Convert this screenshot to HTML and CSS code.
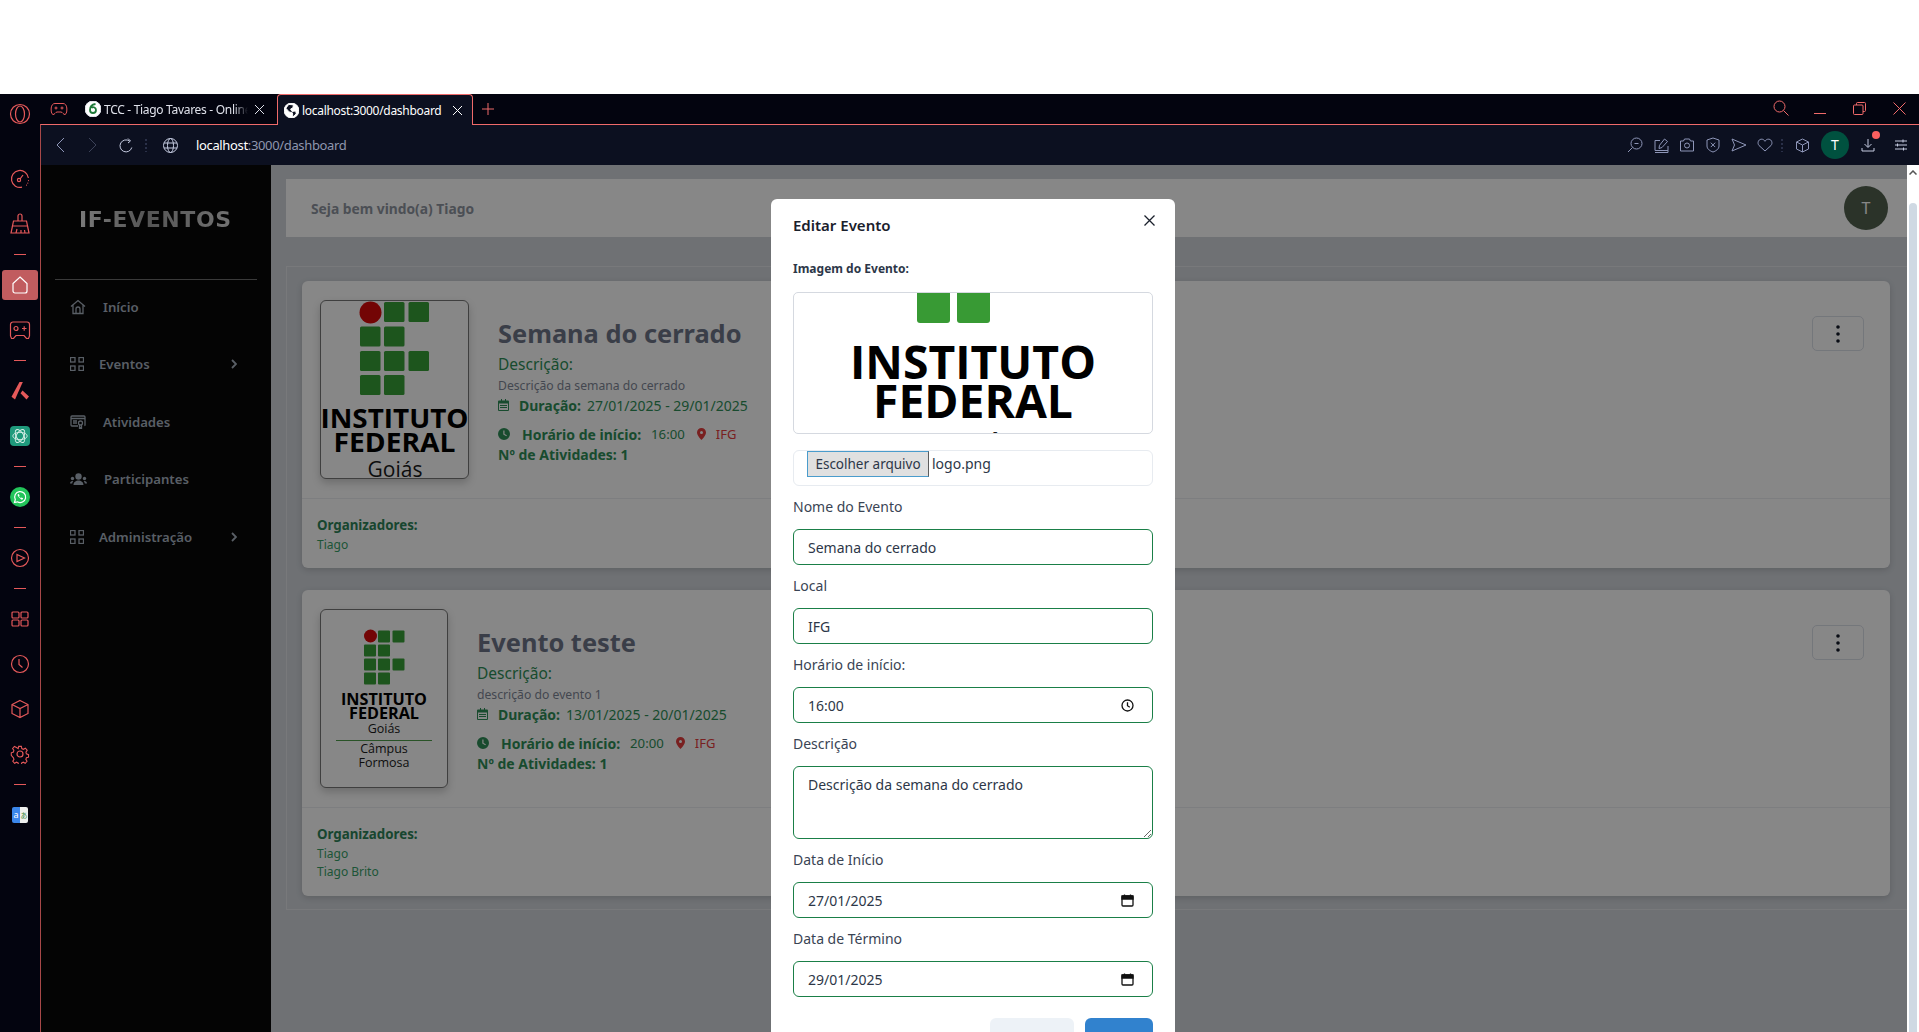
FILE: index.html
```html
<!DOCTYPE html>
<html lang="pt-BR">
<head>
    <meta charset="UTF-8">
    <title>IF-Eventos</title>
    <link rel="stylesheet" href="styles.css">
</head>
<body>
    <div class="top-gap"></div>
    <div class="browser">
        <!-- browser side rail -->
        <aside class="rail">
            <div class="rail-logo">
                <svg width="22" height="22" viewBox="0 0 22 22"><circle cx="11" cy="11" r="9.5"/><ellipse cx="11" cy="11" rx="4.5" ry="8"/></svg>
            </div>
            <div class="rail-item"><svg width="20" height="20" viewBox="0 0 20 20"><path d="M12 18.2A8.5 8.5 0 1 1 18.4 9"/><path d="M18.5 11.5v.1M17.8 14v.1M16.5 16v.1" stroke-linecap="round"/><circle cx="9" cy="11" r="1.6"/><path d="M10 10l3-4"/></svg></div>
            <div class="rail-item"><svg width="20" height="22" viewBox="0 0 20 22"><path d="M8 8V3a2 2 0 0 1 4 0v5"/><path d="M3.5 8h13l1 5H2.5z"/><path d="M2.5 13L1 20h18l-1.5-7M6 20l1-4M11 20v-3M15 20l-.5-3"/></svg></div>
            <div class="rail-sep"></div>
            <div class="rail-item rail-item-active"><span class="rail-home"><svg width="20" height="20" viewBox="0 0 20 20"><path d="M10 2l7 6.5V16a2 2 0 0 1-2 2H5a2 2 0 0 1-2-2V8.5z"/></svg></span></div>
            <div class="rail-item"><svg width="22" height="20" viewBox="0 0 22 20"><path d="M4 2h14a2.5 2.5 0 0 1 2.5 2.5V16l-1 2.5h-2L15 15.500H7l-2.500 3h-2L1.500 16V4.500A2.500 2.500 0 0 1 4 2z"/><circle cx="7" cy="8.5" r="2"/><path d="M13 8.5h4.500M15.200 6.300v4.400"/></svg></div>
            <div class="rail-sep"></div>
            <div class="rail-item"><svg width="20" height="20" viewBox="0 0 20 20"><path class="solid" d="M9.500 1h3.300L5 18.500l-3.500-2.700z"/><path class="solid" d="M12.500 9.500l6.500 6-2.500 3-6-6.300z"/></svg></div>
            <div class="rail-item"><span class="app-gpt"><svg width="16" height="16" viewBox="0 0 14 14"><ellipse cx="7" cy="7" rx="6.300" ry="3.200"/><ellipse cx="7" cy="7" rx="6.300" ry="3.200" transform="rotate(60 7 7)"/><ellipse cx="7" cy="7" rx="6.300" ry="3.200" transform="rotate(120 7 7)"/></svg></span></div>
            <div class="rail-sep"></div>
            <div class="rail-item"><span class="app-whats"><svg width="14" height="14" viewBox="0 0 14 14"><path d="M1.500 12.500l.8-2.900A5.500 5.500 0 1 1 4.400 11.800z"/><path class="phone" d="M5 4.200l.8-.2.8 1.600-.6.700c.4.800 1 1.400 1.900 1.800l.7-.6 1.500.8-.2.800c-.3.500-1 .7-1.600.5C6.800 8.100 5.400 6.800 4.700 5.500c-.2-.5 0-1 .3-1.300z"/></svg></span></div>
            <div class="rail-sep"></div>
            <div class="rail-item"><svg width="20" height="20" viewBox="0 0 20 20"><circle cx="10" cy="10" r="8.500"/><path d="M7 6.500L14.500 10 7 13.500z"/></svg></div>
            <div class="rail-sep"></div>
            <div class="rail-item"><svg width="18" height="16" viewBox="0 0 18 16"><rect x="1" y="1" width="7" height="6" rx="1"/><rect x="10" y="1" width="7" height="6" rx="1"/><rect x="1" y="9" width="7" height="6" rx="1"/><rect x="10" y="9" width="7" height="6" rx="1"/></svg></div>
            <div class="rail-item"><svg width="20" height="20" viewBox="0 0 20 20"><circle cx="10" cy="10" r="8.500"/><path d="M9 5v5.500l3.500 3"/></svg></div>
            <div class="rail-item"><svg width="20" height="20" viewBox="0 0 20 20"><path d="M10 1.500l8 4v9l-8 4-8-4v-9zM2 5.500l8 4 8-4M10 9.500v9"/></svg></div>
            <div class="rail-item"><svg width="20" height="20" viewBox="0 0 20 20"><circle cx="10" cy="10" r="3"/><path d="M8.500 1.500h3l.5 2.500 1.700.8 2.300-1.200 2 2.300-1.400 2.100.5 1.800 2.400.9v2.800l-2.400.7-.6 1.800 1.300 2.100-2 2.200-2.200-1.200-1.700.8-.5 2.300h-3l-.5-2.300-1.700-.8-2.200 1.200-2-2.200 1.300-2.100-.6-1.800L.3 11.500V8.700l2.400-.9.500-1.800-1.400-2.100 2-2.300 2.300 1.200L8 4z" transform="translate(1 1) scale(.9)"/></svg></div>
            <div class="rail-sep"></div>
            <div class="rail-item"><span class="app-translate"><span class="tr-a">a</span><span class="tr-b">あ</span></span></div>
        </aside>

        <div class="main-col">
            <!-- tabs -->
            <div class="tabstrip">
                <div class="tab-game"><svg width="18" height="14" viewBox="0 0 18 14"><path d="M5 1.500h8c2.200 0 3.500 1.800 3.800 4.500.2 2.500 0 6-1.800 6.500-1.500.4-2.500-2.500-4-2.500H7c-1.500 0-2.500 2.900-4 2.500C1.200 12 1 8.500 1.200 6 1.500 3.300 2.800 1.500 5 1.500z"/><circle cx="6" cy="6" r="1"/><circle cx="12" cy="6" r="1"/></svg></div>
                <div class="tab">
                    <span class="fav-tcc"><svg width="16" height="16" viewBox="0 0 16 16"><circle cx="8" cy="8" r="8" fill="#fff"/><path d="M10.500 3C7 3.500 5 6 5 9a3 3 0 0 0 6 0 2.800 2.800 0 0 0-4.500-2.200" fill="none" stroke="#1f7a3a" stroke-width="1.800"/></svg></span>
                    <span class="tab-title tab-title-fade">TCC - Tiago Tavares - Online</span>
                    <svg class="tab-x" width="11" height="11" viewBox="0 0 11 11"><path d="M1 1l9 9M10 1l-9 9"/></svg>
                </div>
                <div class="tab tab-active">
                    <span class="fav-tcc"><svg width="15" height="15" viewBox="0 0 16 16"><circle cx="8" cy="8" r="8" fill="#fff"/><path d="M5 1.500l5 .5-.5 3L7 6.500l1.500 2.500 4-.5.5 3-3.500 3.500L9 10.500 5.500 9.500 2 5.500z" fill="#0c1020"/></svg></span>
                    <span class="tab-title">localhost:3000/dashboard</span>
                    <svg class="tab-x" width="11" height="11" viewBox="0 0 11 11"><path d="M1 1l9 9M10 1l-9 9"/></svg>
                </div>
                <div class="tab-plus"><svg width="12" height="12" viewBox="0 0 12 12"><path d="M6 0v12M0 6h12"/></svg></div>
                <div class="win-controls">
                    <div class="win-btn"><svg width="16" height="16" viewBox="0 0 16 16"><circle cx="6.500" cy="6.500" r="5.500"/><path d="M10.500 10.500l5 5"/></svg></div>
                    <div class="win-btn"><svg width="12" height="12" viewBox="0 0 12 12"><path d="M0 11.500h12"/></svg></div>
                    <div class="win-btn"><svg width="13" height="13" viewBox="0 0 13 13"><rect x=".5" y="3" width="9.500" height="9.500" rx="1"/><path d="M3.500 3V1.500a1 1 0 0 1 1-1h7a1 1 0 0 1 1 1v7a1 1 0 0 1-1 1H10"/></svg></div>
                    <div class="win-btn"><svg width="13" height="13" viewBox="0 0 13 13"><path d="M.5.500l12 12M12.500.500l-12 12"/></svg></div>
                </div>
            </div>

            <div class="window">
                <!-- address bar -->
                <div class="addressbar">
                    <div class="ab-cell"><svg width="10" height="16" viewBox="0 0 10 16"><path d="M9 1L2 8l7 7"/></svg></div>
                    <div class="ab-cell ab-off"><svg width="10" height="16" viewBox="0 0 10 16"><path d="M1 1l7 7-7 7"/></svg></div>
                    <div class="ab-cell ab-light"><svg width="14" height="15" viewBox="0 0 14 15"><path d="M12.800 9.500A6 6 0 1 1 10.500 3"/><path d="M9 .5l2.500 2.500L9 5"/></svg></div>
                    <div class="ab-dots"></div>
                    <div class="ab-globe"><svg width="15" height="15" viewBox="0 0 15 15"><circle cx="7.500" cy="7.500" r="7"/><ellipse cx="7.500" cy="7.500" rx="3" ry="7"/><path d="M1 5h13M1 10h13"/></svg></div>
                    <div class="ab-url"><span class="ab-host">localhost</span>:3000/dashboard</div>

                    <div class="ab-right">
                        <div class="ab-tool"><svg width="16" height="16" viewBox="0 0 16 16"><circle cx="9.500" cy="6.500" r="5.500"/><path d="M5.500 10.500L1 15M7.500 6.500h4"/></svg></div>
                        <div class="ab-tool"><svg width="15" height="15" viewBox="0 0 15 15"><path d="M6 2.500H1v10h13v2H1M14 8v4.500"/><path d="M10.500 1l3 2.500L8 9.500l-3 1 .5-3.200z"/></svg></div>
                        <div class="ab-tool"><svg width="16" height="14" viewBox="0 0 16 14"><path d="M1.500 3h3l1-2h5l1 2h3v10h-13z"/><circle cx="8" cy="7.500" r="2.500"/></svg></div>
                        <div class="ab-tool"><svg width="14" height="16" viewBox="0 0 14 16"><path d="M7 1l6 2v6c0 3-3 5-6 6-3-1-6-3-6-6V3z"/><path d="M4.800 5.700l4.400 4.400M9.200 5.700l-4.400 4.400"/></svg></div>
                        <div class="ab-tool"><svg width="16" height="14" viewBox="0 0 16 14"><path d="M1 1l14 6-14 6 2.500-6z"/></svg></div>
                        <div class="ab-tool"><svg width="16" height="14" viewBox="0 0 16 14"><path d="M8 13L2 7.500C.2 5.500 1 1.500 4.200 1.200 6 1 7.300 2 8 3.300 8.700 2 10 1 11.800 1.200 15 1.500 15.800 5.500 14 7.500z"/></svg></div>
                        <div class="ab-dots"></div>
                        <div class="ab-tool ab-cube"><svg width="15" height="15" viewBox="0 0 15 15"><path d="M7.500 1l6 3v7l-6 3-6-3V4zM1.500 4l6 3 6-3M7.500 7v7"/></svg></div>
                        <div class="ab-avatar">T</div>
                        <div class="ab-tool ab-download"><svg width="14" height="14" viewBox="0 0 14 14"><path d="M7 1v8M3.500 6L7 9.500 10.500 6M1 10v3h12v-3" stroke="#c5cbe0"/></svg><span class="ab-badge"></span></div>
                        <div class="ab-tool ab-menu"><svg width="14" height="12" viewBox="0 0 14 12"><path d="M1 2h12M1 6h12M1 10h12M9 .5v3M3.500 4.500v3M9.500 8.500v3"/></svg></div>
                    </div>
                </div>

                <div class="viewport">
                    <div class="page">
                        <nav class="sidebar">
                            <div class="brand"><span class="brand-text">IF-EVENTOS</span></div>
                            <div class="nav-list">
                                <a class="nav-item"><svg class="nav-ico" width="16" height="16" viewBox="0 0 16 16"><path d="M1 7.500L8 1.500l7 6M3 6v8.500h10V6M6 14.500V10a2 2 0 0 1 4 0v4.500"/></svg><span>Início</span></a>
                                <a class="nav-item nav-item-sub"><svg class="nav-ico" width="14" height="14" viewBox="0 0 14 14"><rect x=".5" y=".5" width="4.500" height="4.500"/><rect x="9" y=".5" width="4.500" height="4.500"/><rect x=".5" y="9" width="4.500" height="4.500"/><rect x="9" y="9" width="4.500" height="4.500"/></svg><span>Eventos</span><svg class="nav-chev" width="6" height="10" viewBox="0 0 6 10"><path d="M1 1l4 4-4 4"/></svg></a>
                                <a class="nav-item"><svg class="nav-ico" width="16" height="14" viewBox="0 0 16 14"><path d="M8 11H2a1 1 0 0 1-1-1V2a1 1 0 0 1 1-1h12a1 1 0 0 1 1 1v8a1 1 0 0 1-.5.8M1 3.500h14M3 6h4M3 8h4"/><circle cx="10.500" cy="8" r="2"/><path d="M9.500 10v3.500l1-.8 1 .8V10"/></svg><span>Atividades</span></a>
                                <a class="nav-item"><svg class="nav-ico nav-ico-solid" width="17" height="13" viewBox="0 0 17 13"><circle cx="8.500" cy="3.500" r="3.200"/><circle cx="2.500" cy="5.500" r="1.700"/><circle cx="14.500" cy="5.500" r="1.700"/><path d="M3.500 12c0-3 2.500-4.500 5-4.500s5 1.500 5 4.500zM0 10.500c0-1.500 1-2.500 2.500-2.500l.8.300c-.7.700-1 1.400-1.100 2.200zM17 10.500c0-1.500-1-2.500-2.500-2.500l-.8.300c.7.700 1 1.400 1.100 2.200z"/></svg><span>Participantes</span></a>
                                <a class="nav-item nav-item-sub"><svg class="nav-ico" width="14" height="14" viewBox="0 0 14 14"><rect x=".5" y=".5" width="4.500" height="4.500"/><rect x="9" y=".5" width="4.500" height="4.500"/><rect x=".5" y="9" width="4.500" height="4.500"/><rect x="9" y="9" width="4.500" height="4.500"/></svg><span>Administração</span><svg class="nav-chev" width="6" height="10" viewBox="0 0 6 10"><path d="M1 1l4 4-4 4"/></svg></a>
                            </div>
                        </nav>

                        <main class="content">
                            <header class="welcome">
                                <span class="welcome-text">Seja bem vindo(a) Tiago</span>
                                <span class="user-avatar">T</span>
                            </header>

                            <section class="events">
                                <article class="card">
                                    <div class="card-body">
                                        <div class="event-img event-img-big">
                                            <svg width="147" height="177" viewBox="0 0 147 177">
                                                <circle cx="49.500" cy="11.500" r="11" fill="#d90a0a"/>
                                                <g fill="#38a038">
                                                    <rect x="63" y="1" width="20.500" height="20" rx="1.500"/><rect x="87.500" y="1" width="20.500" height="20" rx="1.500"/>
                                                    <rect x="39" y="25.500" width="20.500" height="20" rx="1.500"/><rect x="63" y="25.500" width="20.500" height="20" rx="1.500"/>
                                                    <rect x="39" y="50" width="20.500" height="20" rx="1.500"/><rect x="63" y="50" width="20.500" height="20" rx="1.500"/><rect x="87.500" y="50" width="20.500" height="20" rx="1.500"/>
                                                    <rect x="39" y="74" width="20.500" height="20" rx="1.500"/><rect x="63" y="74" width="20.500" height="20" rx="1.500"/>
                                                </g>
                                                <text class="logo-b" x="73.500" y="127" font-size="27" text-anchor="middle" textLength="148" lengthAdjust="spacingAndGlyphs">INSTITUTO</text>
                                                <text class="logo-b" x="73.500" y="151" font-size="27" text-anchor="middle" textLength="122" lengthAdjust="spacingAndGlyphs">FEDERAL</text>
                                                <text class="logo-r" x="74" y="176" font-size="21" text-anchor="middle">Goiás</text>
                                            </svg>
                                        </div>
                                        <div class="event-info">
                                            <h2 class="event-title">Semana do cerrado</h2>
                                            <div class="event-label">Descrição:</div>
                                            <div class="event-desc">Descrição da semana do cerrado</div>
                                            <div class="event-line">
                                                <svg class="ico-green" width="11" height="12" viewBox="0 0 11 12"><path d="M1 1.500h2V0h1v1.500h3V0h1v1.500h2a1 1 0 0 1 1 1V11a1 1 0 0 1-1 1H1a1 1 0 0 1-1-1V2.500a1 1 0 0 1 1-1zM1 4.500V11h9V4.500z"/><path d="M2 6h7v1H2zM2 8h7v1H2z"/></svg>
                                                <b class="gap-dur">Duração:</b><span class="gap-val">27/01/2025 - 29/01/2025</span>
                                            </div>
                                            <div class="event-line event-line-time">
                                                <svg class="ico-green" width="12" height="12" viewBox="0 0 12 12"><path d="M6 0a6 6 0 1 1 0 12A6 6 0 0 1 6 0zm-.7 2.500v4l3 1.800.6-1-2.400-1.400V2.500z"/></svg>
                                                <b class="gap-time">Horário de início:</b><span class="gap-hour">16:00</span>
                                                <svg class="ico-red" width="9" height="12" viewBox="0 0 9 12"><path d="M4.500 0a4.500 4.500 0 0 1 4.500 4.500C9 7.500 4.500 12 4.500 12S0 7.500 0 4.500A4.500 4.500 0 0 1 4.500 0zm0 3a1.500 1.500 0 1 0 0 3 1.500 1.500 0 0 0 0-3z"/></svg>
                                                <span class="event-place">IFG</span>
                                            </div>
                                            <div class="event-count">Nº de Atividades: 1</div>
                                        </div>
                                        <button class="kebab"><svg width="4" height="18" viewBox="0 0 4 18"><circle cx="2" cy="2" r="1.800"/><circle cx="2" cy="9" r="1.800"/><circle cx="2" cy="16" r="1.800"/></svg></button>
                                    </div>
                                    <div class="card-foot">
                                        <div class="foot-title">Organizadores:</div>
                                        <div class="foot-name">Tiago</div>
                                    </div>
                                </article>

                                <article class="card">
                                    <div class="card-body">
                                        <div class="event-img event-img-small">
                                            <svg width="126" height="177" viewBox="0 0 126 177">
                                                <circle cx="49.500" cy="26" r="6.500" fill="#d90a0a"/>
                                                <g fill="#38a038">
                                                    <rect x="57" y="20.500" width="12" height="12" rx="1"/><rect x="71.500" y="20.500" width="12" height="12" rx="1"/>
                                                    <rect x="43" y="34.500" width="12" height="12" rx="1"/><rect x="57" y="34.500" width="12" height="12" rx="1"/>
                                                    <rect x="43" y="48.500" width="12" height="12" rx="1"/><rect x="57" y="48.500" width="12" height="12" rx="1"/><rect x="71.500" y="48.500" width="12" height="12" rx="1"/>
                                                    <rect x="43" y="62.500" width="12" height="12" rx="1"/><rect x="57" y="62.500" width="12" height="12" rx="1"/>
                                                </g>
                                                <text class="logo-b" x="63" y="95" font-size="16" text-anchor="middle" textLength="86" lengthAdjust="spacingAndGlyphs">INSTITUTO</text>
                                                <text class="logo-b" x="63" y="109" font-size="16" text-anchor="middle" textLength="70" lengthAdjust="spacingAndGlyphs">FEDERAL</text>
                                                <text class="logo-r" x="63" y="123" font-size="12.500" text-anchor="middle">Goiás</text>
                                                <rect x="15" y="130" width="96" height="1" fill="#4f9e4a"/>
                                                <text class="logo-r" x="63" y="143" font-size="12.500" text-anchor="middle">Câmpus</text>
                                                <text class="logo-r" x="63" y="157" font-size="12.500" text-anchor="middle">Formosa</text>
                                            </svg>
                                        </div>
                                        <div class="event-info">
                                            <h2 class="event-title">Evento teste</h2>
                                            <div class="event-label">Descrição:</div>
                                            <div class="event-desc">descrição do evento 1</div>
                                            <div class="event-line">
                                                <svg class="ico-green" width="11" height="12" viewBox="0 0 11 12"><path d="M1 1.500h2V0h1v1.500h3V0h1v1.500h2a1 1 0 0 1 1 1V11a1 1 0 0 1-1 1H1a1 1 0 0 1-1-1V2.500a1 1 0 0 1 1-1zM1 4.500V11h9V4.500z"/><path d="M2 6h7v1H2zM2 8h7v1H2z"/></svg>
                                                <b class="gap-dur">Duração:</b><span class="gap-val">13/01/2025 - 20/01/2025</span>
                                            </div>
                                            <div class="event-line event-line-time">
                                                <svg class="ico-green" width="12" height="12" viewBox="0 0 12 12"><path d="M6 0a6 6 0 1 1 0 12A6 6 0 0 1 6 0zm-.7 2.500v4l3 1.800.6-1-2.400-1.400V2.500z"/></svg>
                                                <b class="gap-time">Horário de início:</b><span class="gap-hour">20:00</span>
                                                <svg class="ico-red" width="9" height="12" viewBox="0 0 9 12"><path d="M4.500 0a4.500 4.500 0 0 1 4.500 4.500C9 7.500 4.500 12 4.500 12S0 7.500 0 4.500A4.500 4.500 0 0 1 4.500 0zm0 3a1.500 1.500 0 1 0 0 3 1.500 1.500 0 0 0 0-3z"/></svg>
                                                <span class="event-place">IFG</span>
                                            </div>
                                            <div class="event-count">Nº de Atividades: 1</div>
                                        </div>
                                        <button class="kebab"><svg width="4" height="18" viewBox="0 0 4 18"><circle cx="2" cy="2" r="1.800"/><circle cx="2" cy="9" r="1.800"/><circle cx="2" cy="16" r="1.800"/></svg></button>
                                    </div>
                                    <div class="card-foot card-foot-second">
                                        <div class="foot-title">Organizadores:</div>
                                        <div class="foot-name">Tiago</div>
                                        <div class="foot-name">Tiago Brito</div>
                                    </div>
                                </article>
                            </section>
                        </main>

                        <!-- edit modal -->
                        <div class="overlay">
                            <div class="modal">
                                <div class="modal-head">
                                    <span class="modal-title">Editar Evento</span>
                                    <svg class="modal-close" width="11" height="11" viewBox="0 0 11 11"><path d="M.5.500l10 10M10.500.500l-10 10"/></svg>
                                </div>
                                <div class="img-label">Imagem do Evento:</div>
                                <div class="img-preview">
                                    <svg width="358" height="140" viewBox="0 0 358 140">
                                        <rect x="123" y="-20" width="33" height="50" rx="3" fill="#389a34"/>
                                        <rect x="163" y="-20" width="33" height="50" rx="3" fill="#389a34"/>
                                        <text class="logo-b" x="179" y="86" font-size="46" text-anchor="middle" textLength="246" lengthAdjust="spacingAndGlyphs">INSTITUTO</text>
                                        <text class="logo-b" x="179" y="125" font-size="46" text-anchor="middle" textLength="200" lengthAdjust="spacingAndGlyphs">FEDERAL</text>
                                        <text class="logo-r" x="179" y="166" font-size="35" text-anchor="middle">Goiás</text>
                                    </svg>
                                </div>
                                <div class="file-box">
                                    <button class="file-btn">Escolher arquivo</button>
                                    <span class="file-name">logo.png</span>
                                </div>
                                <div class="field">
                                    <label>Nome do Evento</label>
                                    <div class="input">Semana do cerrado</div>
                                </div>
                                <div class="field">
                                    <label>Local</label>
                                    <div class="input">IFG</div>
                                </div>
                                <div class="field">
                                    <label>Horário de início:</label>
                                    <div class="input"><span>16:00</span><svg class="input-ico" width="13" height="13" viewBox="0 0 13 13"><circle cx="6.500" cy="6.500" r="5.500"/><path d="M6.500 3.300v3.400l2.300 1.500"/></svg></div>
                                </div>
                                <div class="field">
                                    <label>Descrição</label>
                                    <textarea class="textarea" rows="3">Descrição da semana do cerrado</textarea>
                                </div>
                                <div class="field">
                                    <label>Data de Início</label>
                                    <div class="input"><span>27/01/2025</span><svg class="input-ico" width="13" height="13" viewBox="0 0 13 13"><rect x="1" y="2" width="11" height="10" rx="1"/><path class="cal-top" d="M1 2h11v3H1zM3.500 .5V2M9.500 .5V2"/></svg></div>
                                </div>
                                <div class="field">
                                    <label>Data de Término</label>
                                    <div class="input"><span>29/01/2025</span><svg class="input-ico" width="13" height="13" viewBox="0 0 13 13"><rect x="1" y="2" width="11" height="10" rx="1"/><path class="cal-top" d="M1 2h11v3H1zM3.500 .5V2M9.500 .5V2"/></svg></div>
                                </div>
                                <div class="modal-actions">
                                    <button class="btn btn-cancel">Cancelar</button>
                                    <button class="btn btn-save">Salvar</button>
                                </div>
                            </div>
                        </div>
                    </div>

                    <div class="scrollbar">
                        <svg width="8" height="5" viewBox="0 0 8 5"><path d="M.5 4.500L4 1l3.500 3.500"/></svg>
                        <div class="scroll-thumb"></div>
                    </div>
                </div>
            </div>
        </div>
    </div>
</body>
</html>
```

FILE: styles.css
```css
* {
    box-sizing: border-box;
}

html, body {
    margin: 0;
    height: 100%;
    overflow: hidden;
    background-color: #fff;
    font-family: "Noto Sans", "Open Sans", Arial, sans-serif;
}

.top-gap {
    height: 94px;
}

.browser {
    display: flex;
    height: 938px;
    background-color: #03040f;
}

/* side rail */
.rail {
    width: 40px;
    flex: none;
    display: flex;
    flex-direction: column;
    color: #e5595a;
}

.rail svg {
    fill: none;
    stroke: currentColor;
    stroke-width: 1.2;
}

.rail-logo {
    height: 40px;
    margin-bottom: 22px;
    display: flex;
    align-items: center;
    justify-content: center;
}

.rail-item {
    height: 45px;
    flex: none;
    display: flex;
    align-items: center;
    justify-content: center;
}

.rail-sep {
    height: 16px;
    flex: none;
    display: flex;
    align-items: center;
    justify-content: center;
}

.rail-sep::before {
    content: "";
    width: 12px;
    height: 1px;
    background-color: #e5595a;
}

.rail-home {
    width: 36px;
    height: 30px;
    border-radius: 3px;
    background-color: #c15c5f;
    color: #fff;
    display: flex;
    align-items: center;
    justify-content: center;
}

.rail .solid {
    fill: currentColor;
    stroke: none;
}

.app-gpt {
    width: 20px;
    height: 20px;
    border-radius: 4px;
    background-color: #1f9a7c;
    color: #d8efe7;
    display: flex;
    align-items: center;
    justify-content: center;
}

.rail .app-gpt svg {
    stroke-width: 0.8;
}

.app-whats {
    width: 20px;
    height: 20px;
    border-radius: 50%;
    background-color: #22c45a;
    color: #fff;
    display: flex;
    align-items: center;
    justify-content: center;
}

.rail .phone {
    fill: #fff;
    stroke: none;
}

.app-translate {
    width: 16px;
    height: 16px;
    border-radius: 2px;
    display: flex;
    overflow: hidden;
    font-size: 9px;
    line-height: 16px;
    text-align: center;
}

.tr-a {
    width: 8px;
    background-color: #3b87ea;
    color: #fff;
}

.tr-b {
    width: 8px;
    background-color: #eef0ee;
    color: #3c8a3c;
    font-family: "Noto Sans CJK JP", sans-serif;
    font-size: 7px;
}

/* tabs */
.main-col {
    flex: 1;
    min-width: 0;
    display: flex;
    flex-direction: column;
}

.tabstrip {
    height: 30px;
    flex: none;
    display: flex;
    align-items: flex-start;
    color: #fff;
    font-size: 12px;
    position: relative;
    z-index: 2;
}

.tabstrip svg {
    fill: none;
    stroke: currentColor;
}

.tab-game {
    width: 20px;
    margin-left: 9px;
    margin-right: 8px;
    height: 30px;
    display: flex;
    align-items: center;
    justify-content: center;
    color: #e5595a;
}

.tab {
    height: 30px;
    width: 200px;
    padding-left: 8px;
    display: flex;
    align-items: center;
    color: #dfe1ea;
}

.tab-active {
    height: 31px;
    width: 196px;
    padding-left: 6px;
    background-color: #0c1020;
    border: 1px solid #f06a6a;
    border-bottom: none;
    border-radius: 4px 4px 0 0;
    color: #fff;
}

.fav-tcc {
    display: flex;
    flex: none;
}

.tab-title {
    margin-left: 3px;
    white-space: nowrap;
    overflow: hidden;
    flex: 1;
    letter-spacing: -0.3px;
}

.tab-title-fade {
    flex: none;
    width: 144px;
    -webkit-mask-image: linear-gradient(90deg, #000 90%, transparent);
    mask-image: linear-gradient(90deg, #000 90%, transparent);
}

.tab-x {
    flex: none;
    margin-left: 6px;
    margin-right: 9px;
    stroke: #d8dae4;
}

.tab-plus {
    height: 30px;
    width: 30px;
    display: flex;
    align-items: center;
    justify-content: center;
    color: #f06a6a;
}

.win-controls {
    margin-left: auto;
    display: flex;
    color: #f06a6a;
}

.win-btn {
    width: 39.5px;
    height: 28px;
    display: flex;
    align-items: center;
    justify-content: center;
}

/* the window part with the red edge */
.window {
    flex: 1;
    min-height: 0;
    display: flex;
    flex-direction: column;
    border-top: 1px solid #f06a6a;
    border-left: 1px solid #a84848;
}

.addressbar {
    height: 40px;
    flex: none;
    background-color: #0c1020;
    display: flex;
    align-items: center;
    padding-left: 2px;
    padding-right: 5px;
}

.addressbar svg {
    fill: none;
    stroke: #8e96b8;
}

.ab-cell {
    width: 33px;
    display: flex;
    justify-content: center;
}

.ab-off svg {
    stroke: #3c4258;
}

.ab-light svg {
    stroke: #c5cbe0;
}

.ab-dots {
    width: 8px;
    height: 14px;
    flex: none;
    background-image: radial-gradient(circle, #2a3048 1px, transparent 1.2px);
    background-size: 8px 4px;
}

.ab-globe {
    margin-left: 13px;
    display: flex;
}

.ab-globe svg {
    stroke: #c5cbe0;
}

.ab-url {
    margin-left: 18px;
    color: #8f96ae;
    font-size: 13px;
    letter-spacing: -0.35px;
}

.ab-host {
    color: #fff;
}

.ab-right {
    margin-left: auto;
    display: flex;
    align-items: center;
}

.ab-tool {
    width: 26px;
    display: flex;
    justify-content: center;
    position: relative;
}

.ab-cube {
    margin-left: 3px;
}

.ab-avatar {
    width: 28px;
    height: 28px;
    margin-left: 6px;
    border-radius: 50%;
    background-color: #00513f;
    color: #fff;
    font-size: 14px;
    line-height: 28px;
    text-align: center;
}

.ab-download {
    margin-left: 6px;
}

.ab-badge {
    position: absolute;
    top: -7px;
    right: 1px;
    width: 8px;
    height: 8px;
    border-radius: 50%;
    background-color: #fb5f5f;
}

.ab-menu {
    margin-left: 7px;
}

.ab-menu svg {
    stroke: #c5cbe0;
}

/* page */
.viewport {
    flex: 1;
    min-height: 0;
    display: flex;
}

.page {
    flex: 1;
    min-width: 0;
    position: relative;
    overflow: hidden;
    display: flex;
    background-color: #d1d5db;
}

.scrollbar {
    width: 12px;
    flex: none;
    background-color: #fff;
    display: flex;
    flex-direction: column;
    align-items: center;
    padding-top: 5px;
}

.scrollbar svg {
    fill: none;
    stroke: #555;
    stroke-width: 1.5;
}

.scroll-thumb {
    width: 8px;
    flex: 1;
    margin-top: 28px;
    border-radius: 4px 4px 0 0;
    background-color: #cfd9e3;
}

.sidebar {
    width: 230px;
    flex: none;
    background-color: #080808;
}

.brand {
    height: 115px;
    padding-top: 38px;
    padding-left: 24px;
    margin: 0 14px;
    border-bottom: 1px solid #6f6f6f;
    font-family: "DejaVu Sans", sans-serif;
    font-weight: 700;
    font-size: 22px;
    line-height: 34px;
    letter-spacing: 0.6px;
}

.brand-text {
    background-image: linear-gradient(90deg, #e6e6e6, #a0a0a0 45%, #d8d8d8);
    -webkit-background-clip: text;
    background-clip: text;
    color: transparent;
}

.nav-list {
    margin-top: -2px;
}

.nav-item {
    height: 57.5px;
    padding-left: 29px;
    padding-right: 34px;
    display: flex;
    align-items: center;
    color: #a9b3c0;
    font-size: 13.2px;
    font-weight: 600;
}

.nav-item > span {
    margin-left: 17px;
}

.nav-item-sub > span {
    margin-left: 15px;
}

.nav-ico, .nav-chev {
    fill: none;
    stroke: currentColor;
    stroke-width: 1.3;
    flex: none;
}

.nav-ico-solid {
    fill: currentColor;
    stroke: none;
}

.nav-chev {
    margin-left: auto;
    stroke-width: 1.8;
}

.content {
    flex: 1;
    min-width: 0;
    padding: 14px 0 0 15px;
}

.welcome {
    height: 58px;
    background-color: #fff;
    display: flex;
    align-items: center;
    justify-content: space-between;
    padding-left: 25px;
    padding-right: 19px;
}

.welcome-text {
    color: #8f95a0;
    font-size: 13.8px;
    font-weight: 700;
}

.user-avatar {
    width: 44px;
    height: 44px;
    border-radius: 50%;
    background-color: #51614f;
    color: #fff;
    font-size: 16px;
    line-height: 44px;
    text-align: center;
}

.events {
    margin-top: 29px;
    border: 1px solid #e2e4e8;
    border-right: none;
    padding: 14px 17px 13px 15px;
    display: flex;
    flex-direction: column;
    gap: 22px;
}

.card {
    background-color: #fff;
    border-radius: 6px;
    box-shadow: 0 2px 6px rgba(0, 0, 0, 0.15);
}

.card-body {
    display: flex;
    align-items: center;
    padding: 19px 26px 19px 18px;
}

.event-img {
    flex: none;
    height: 179px;
    border: 1px solid #777;
    border-radius: 6px;
    box-shadow: 0 4px 8px rgba(0, 0, 0, 0.2);
    background-color: #fff;
    overflow: hidden;
}

.event-img svg {
    display: block;
}

.event-img-big {
    width: 149px;
}

.event-img-small {
    width: 128px;
}

.logo-b {
    font-family: "Open Sans", "Noto Sans", sans-serif;
    font-weight: 700;
    fill: #000;
}

.logo-r {
    font-family: "Open Sans", "Noto Sans", sans-serif;
    fill: #1a1a1a;
}

.event-info {
    flex: 1;
    margin-left: 29px;
    padding-top: 2px;
    color: #2f8f58;
}

.event-img-small + .event-info {
    margin-left: 29px;
}

.event-title {
    margin: 0;
    font-size: 25.4px;
    line-height: 36px;
    font-weight: 700;
    color: #6f7689;
}

.event-label {
    font-size: 15.5px;
    line-height: 26px;
}

.event-desc {
    font-size: 12.2px;
    line-height: 18px;
    color: #7f8797;
}

.event-line {
    display: flex;
    align-items: center;
    height: 20px;
    font-size: 14px;
}

.event-line-time {
    margin-top: 9px;
}

.event-line b {
    font-weight: 700;
}

.ico-green {
    fill: #2f8f58;
    flex: none;
}

.ico-red {
    fill: #e53e3e;
    flex: none;
}

.gap-dur {
    margin-left: 10px;
}

.gap-val {
    margin-left: 6px;
}

.gap-time {
    margin-left: 12px;
}

.gap-hour {
    margin-left: 10px;
    font-size: 13.2px;
}

.event-line .ico-red {
    margin-left: 12px;
}

.event-place {
    margin-left: 10px;
    font-size: 13px;
    color: #e53e3e;
}

.event-count {
    font-size: 14px;
    line-height: 22px;
    font-weight: 700;
}

.kebab {
    align-self: flex-start;
    flex: none;
    margin-top: 16px;
    width: 52px;
    height: 35px;
    background-color: transparent;
    border: 1px solid #dbe0e8;
    border-radius: 5px;
    display: flex;
    align-items: center;
    justify-content: center;
    padding: 0;
}

.kebab svg {
    fill: #111827;
}

.card-foot {
    border-top: 1px solid #eceef2;
    padding: 16px 15px 14px;
}

.card-foot-second {
    padding-bottom: 15px;
}

.foot-title {
    font-size: 13.3px;
    font-weight: 700;
    line-height: 21px;
    color: #2f855a;
}

.foot-name {
    font-size: 12px;
    line-height: 18px;
    color: #38a169;
}

/* modal */
.overlay {
    position: absolute;
    top: 0;
    left: 0;
    right: 0;
    bottom: 0;
    background-color: rgba(0, 0, 0, 0.47);
    display: flex;
    justify-content: center;
    align-items: flex-start;
}

.modal {
    width: 404px;
    margin-top: 34px;
    margin-right: 2px;
    padding: 16px 22px 20px;
    background-color: #fff;
    border-radius: 6px;
    color: #2d3748;
    flex: none;
}

.modal-head {
    display: flex;
    align-items: center;
    justify-content: space-between;
    height: 20px;
}

.modal-title {
    font-size: 15px;
    font-weight: 600;
    color: #1a202c;
}

.modal-close {
    fill: none;
    stroke: #1a202c;
    stroke-width: 1.3;
    margin-right: -2px;
    margin-top: -10px;
}

.img-label {
    margin-top: 26px;
    font-size: 12px;
    line-height: 16px;
    font-weight: 700;
}

.img-preview {
    margin-top: 15px;
    height: 142px;
    border: 1px solid #d5d9e0;
    border-radius: 5px;
    overflow: hidden;
}

.img-preview svg {
    display: block;
    overflow: hidden;
}

.file-box {
    margin-top: 16px;
    height: 36px;
    border: 1px solid #e7ebf0;
    border-radius: 6px;
    padding-left: 13px;
    display: flex;
    align-items: flex-start;
    font-size: 14px;
}

.file-btn {
    width: 122px;
    height: 26px;
    padding: 0;
    font-family: inherit;
    font-size: 13.5px;
    color: #2d3748;
    background-color: #e0e0e0;
    border: 1px solid #5c6a72;
    border-color: #4a9ccc #5c5c5c #4a9ccc #4a9ccc;
}

.file-name {
    margin-left: 3px;
    line-height: 25px;
}

.field {
    margin-top: 11px;
}

.field label {
    display: block;
    font-size: 14px;
    line-height: 20px;
    margin-bottom: 12px;
    color: #3a4454;
}

.input {
    height: 36px;
    border: 1px solid #1a7f47;
    border-radius: 6px;
    padding: 0 14px;
    display: flex;
    align-items: center;
    justify-content: space-between;
    font-size: 14px;
}

.input-ico {
    fill: none;
    stroke: #111;
    stroke-width: 1.3;
    margin-right: 4px;
}

.cal-top {
    fill: #111;
}

.textarea {
    display: block;
    width: 100%;
    height: 73px;
    padding: 8px 14px;
    border: 1px solid #1a7f47;
    border-radius: 6px;
    outline: none;
    font-family: inherit;
    font-size: 14px;
    color: #2d3748;
}

.modal-actions {
    margin-top: 21px;
    display: flex;
    justify-content: flex-end;
    gap: 11px;
}

.btn {
    height: 40px;
    border: none;
    border-radius: 6px;
    font-family: inherit;
    font-size: 14px;
    font-weight: 600;
}

.btn-cancel {
    width: 84px;
    background-color: #edf2f7;
    color: #1a202c;
}

.btn-save {
    width: 68px;
    background-color: #3182ce;
    color: #fff;
}
```
